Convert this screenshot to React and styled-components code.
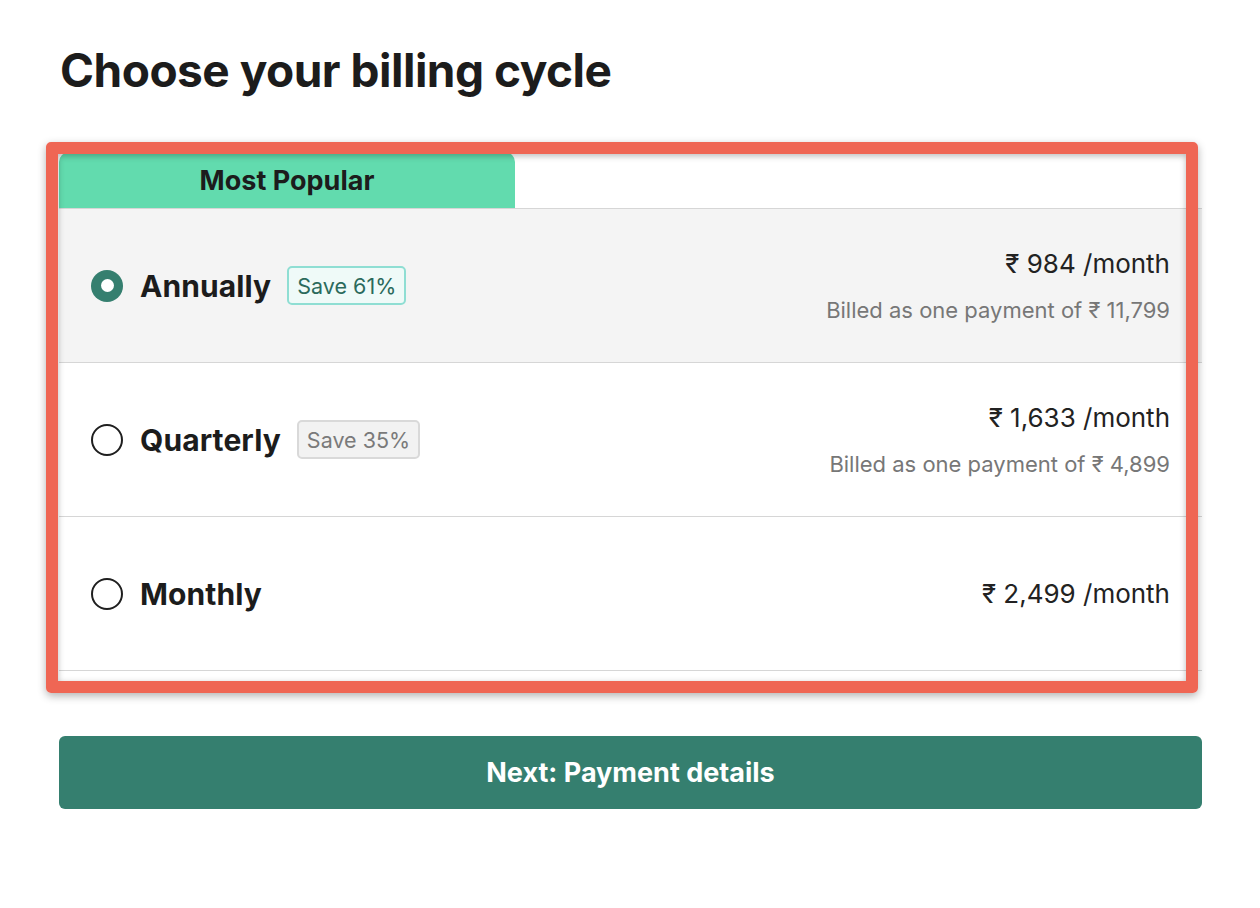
import React, { useState } from "react";
import styled, { createGlobalStyle } from "styled-components";

const Global = createGlobalStyle`
  html, body { margin: 0; padding: 0; background: #ffffff; }
  body { font-family: Inter, "Noto Sans", sans-serif; color: #1f1f1f; }
  * { box-sizing: border-box; }
`;

const Page = styled.div`
  padding: 42px 58px 0 59px;
`;

const Title = styled.h1`
  margin: 0 0 54px 1px;
  font-size: 46px;
  line-height: 56px;
  font-weight: 700;
  letter-spacing: -0.5px;
  color: #1c1c1c;
`;

const CardWrap = styled.div`
  position: relative;
`;

const Highlight = styled.div`
  position: absolute;
  left: -13px;
  right: 4px;
  top: -10px;
  bottom: -22px;
  border: 12px solid #ef6654;
  border-radius: 5px;
  box-shadow: 0 3px 8px rgba(0, 0, 0, 0.3), inset 0 2px 6px rgba(0, 0, 0, 0.28);
  pointer-events: none;
`;

const Tab = styled.div`
  width: 456px;
  height: 56px;
  background: #62dbae;
  border-radius: 10px 10px 0 0;
  display: flex;
  align-items: center;
  justify-content: center;
  font-size: 27px;
  font-weight: 700;
  color: #1c1c1c;
  padding-top: 1px;
`;

const List = styled.div`
  border-top: 1px solid #d6d6d6;
`;

const Row = styled.label`
  display: flex;
  align-items: center;
  justify-content: space-between;
  height: 154px;
  padding: 0 32px;
  border-bottom: 1px solid #d6d6d6;
  background: ${(p) => (p.$selected ? "#f4f4f4" : "#ffffff")};
  cursor: pointer;
`;

const Left = styled.div`
  display: flex;
  align-items: center;
`;

const Radio = styled.span`
  width: 32px;
  height: 32px;
  border-radius: 50%;
  display: flex;
  align-items: center;
  justify-content: center;
  background: ${(p) => (p.$checked ? "#357f6f" : "transparent")};
  border: ${(p) => (p.$checked ? "none" : "2.5px solid #1f1f1f")};
  &::after {
    content: "";
    display: ${(p) => (p.$checked ? "block" : "none")};
    width: 13px;
    height: 13px;
    border-radius: 50%;
    background: #ffffff;
  }
`;

const Name = styled.span`
  margin-left: 17px;
  font-size: 30px;
  font-weight: 700;
  letter-spacing: 0.1px;
  color: #1c1c1c;
`;

const Badge = styled.span`
  margin-left: 16px;
  height: 39px;
  padding: 0 8px;
  display: inline-flex;
  align-items: center;
  border-radius: 5px;
  font-size: 21.5px;
  border: 2px solid ${(p) => (p.$accent ? "#8fded3" : "#d9d9d9")};
  background: ${(p) => (p.$accent ? "#effaf8" : "#f2f2f2")};
  color: ${(p) => (p.$accent ? "#2b6a5c" : "#7a7a7a")};
`;

const Right = styled.div`
  display: flex;
  flex-direction: column;
  align-items: flex-end;
  gap: 16px;
`;

const Price = styled.span`
  font-size: 26px;
  line-height: 32px;
  color: #222222;
`;

const Billed = styled.span`
  font-size: 22px;
  line-height: 28px;
  color: #777777;
`;

const Button = styled.button`
  display: block;
  margin-top: 65px;
  width: 100%;
  height: 73px;
  border: none;
  border-radius: 6px;
  background: #357f6f;
  color: #ffffff;
  font-family: inherit;
  font-size: 27px;
  font-weight: 700;
  cursor: pointer;
`;

const plans = [
  { id: "annual", name: "Annually", save: "Save 61%", price: "₹ 984 /month", billed: "Billed as one payment of ₹ 11,799" },
  { id: "quarter", name: "Quarterly", save: "Save 35%", price: "₹ 1,633 /month", billed: "Billed as one payment of ₹ 4,899" },
  { id: "month", name: "Monthly", price: "₹ 2,499 /month" },
];

export default function App() {
  const [sel, setSel] = useState("annual");
  return (
    <Page>
      <Global />
      <Title>Choose your billing cycle</Title>
      <CardWrap>
        <Tab>Most Popular</Tab>
        <List>
          {plans.map((p) => (
            <Row key={p.id} $selected={sel === p.id} onClick={() => setSel(p.id)}>
              <Left>
                <Radio $checked={sel === p.id} />
                <Name>{p.name}</Name>
                {p.save && <Badge $accent={sel === p.id}>{p.save}</Badge>}
              </Left>
              <Right>
                <Price>{p.price}</Price>
                {p.billed && <Billed>{p.billed}</Billed>}
              </Right>
            </Row>
          ))}
        </List>
        <Highlight />
      </CardWrap>
      <Button>Next: Payment details</Button>
    </Page>
  );
}
